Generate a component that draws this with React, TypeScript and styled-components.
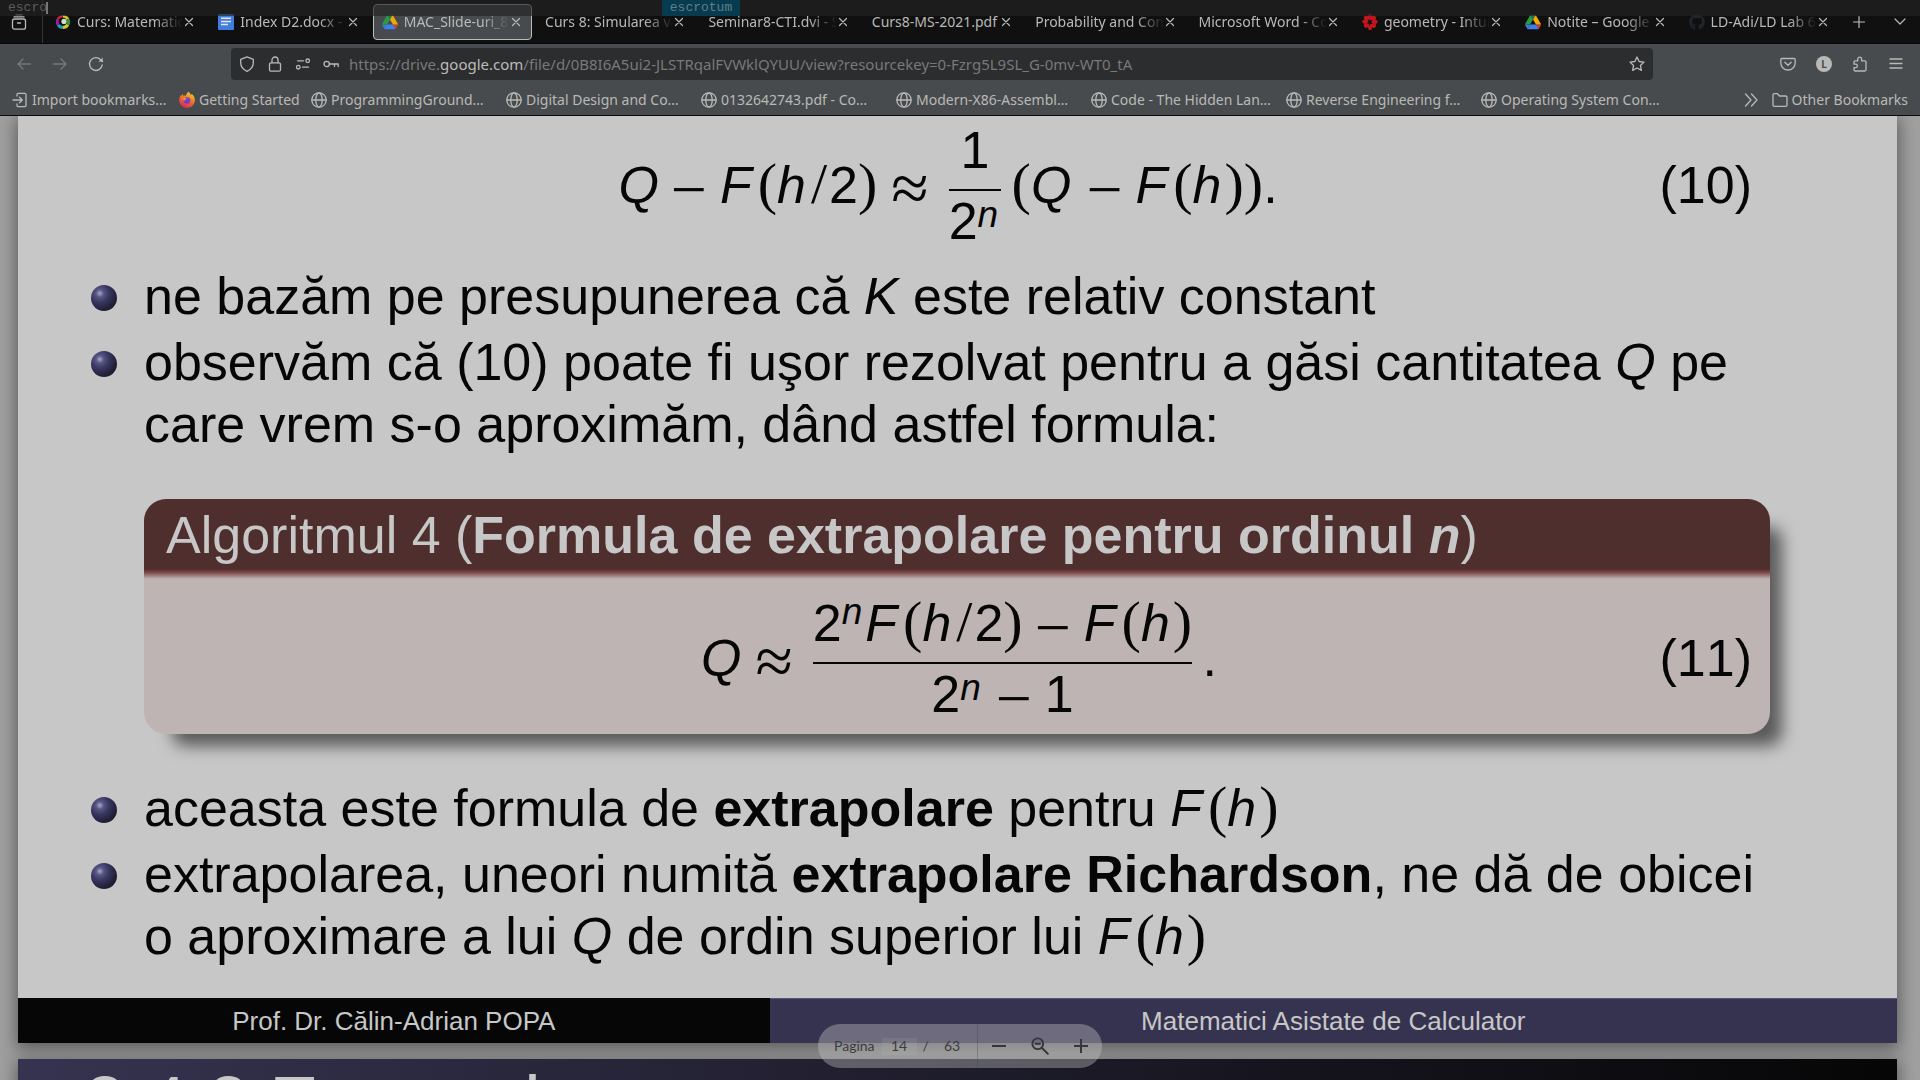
import React from "react";
import styled, { createGlobalStyle } from "styled-components";
import { FaGithub } from "react-icons/fa";

const ui = `"Noto Sans", "Open Sans", sans-serif`;
const slideFont = `"Liberation Sans", Arial, sans-serif`;
const serif = `"Liberation Serif", "Times New Roman", serif`;
const mono = `"Liberation Mono", "Courier New", monospace`;

const Global = createGlobalStyle`
  * { box-sizing: border-box; }
  body { margin: 0; background: #111; overflow: hidden; }
  button, input { font: inherit; color: inherit; margin: 0; }
`;

const Window = styled.div`
  height: 100vh;
  display: flex;
  flex-direction: column;
  font-family: ${ui};
  font-size: 14px;
  color: #b9b9b7;
`;

/* ---------- launcher bar ---------- */

const Launcher = styled.div`
  position: absolute;
  top: 0;
  left: 0;
  right: 0;
  height: 16px;
  z-index: 5;
  background: rgba(35, 35, 35, 0.66);
  font-family: ${mono};
  font-size: 13px;
  line-height: 16px;
  color: #5c5c5c;
  display: flex;
`;

const Query = styled.input`
  width: 662px;
  height: 16px;
  padding: 0 8px;
  border: 0;
  outline: 0;
  background: transparent;
`;

const Caret = styled.span`
  position: absolute;
  left: 46px;
  top: 2px;
  width: 2px;
  height: 12px;
  background: #777;
`;

const Match = styled.button`
  width: 78px;
  border: 0;
  padding: 0;
  background: #073b50;
  color: #5f7f88;
`;

/* ---------- tabs ---------- */

const TabStrip = styled.div`
  height: 44px;
  display: flex;
  align-items: center;
  background: #101010;
  border-bottom: 1px solid #060606;
`;

const IconButton = styled.button<{ $w?: number; $color?: string }>`
  width: ${(p) => p.$w ?? 36}px;
  height: 32px;
  flex: none;
  padding: 0;
  border: 0;
  background: transparent;
  display: flex;
  align-items: center;
  justify-content: center;
  color: ${(p) => p.$color ?? "#b9b9b7"};
`;

const ViewSlot = styled.div`
  width: 43px;
  height: 100%;
  flex: none;
  display: flex;
  align-items: center;
  justify-content: center;
  padding-right: 4px;
  border-right: 1px solid #333;
`;

const Tabs = styled.div`
  flex: 1;
  min-width: 0;
  display: flex;
  gap: 4px;
  padding-left: 3px;
`;

const Tab = styled.div<{ $active?: boolean }>`
  flex: 1 1 0;
  min-width: 0;
  height: 36px;
  display: flex;
  align-items: center;
  gap: 6px;
  padding: 0 7px 0 8px;
  border: 1px solid ${(p) => (p.$active ? "#bcbcba" : "transparent")};
  border-radius: 4px;
  background: ${(p) => (p.$active ? "#484b4d" : "transparent")};
`;

const TabTitle = styled.span<{ $fade?: boolean }>`
  flex: 1;
  min-width: 0;
  overflow: hidden;
  white-space: nowrap;
  line-height: 20px;
  ${(p) => p.$fade && "mask-image: linear-gradient(to left, transparent, #000 28px);"}
`;

const TabClose = styled.button`
  width: 16px;
  height: 16px;
  flex: none;
  margin-left: -8px;
  padding: 0;
  border: 0;
  background: transparent;
  display: flex;
  align-items: center;
  justify-content: center;
`;

const TabTools = styled.div`
  width: 81px;
  flex: none;
  display: flex;
  justify-content: space-between;
`;

/* ---------- navigation ---------- */

const NavBar = styled.div`
  height: 40px;
  flex: none;
  display: flex;
  align-items: center;
  padding: 0 6px;
  background: #484b4d;
`;

const UrlBox = styled.div`
  flex: 1;
  min-width: 0;
  height: 32px;
  margin: 0 117px;
  padding: 0 2px;
  display: flex;
  align-items: center;
  border-radius: 4px;
  background: #2c2d2f;
`;

const UrlText = styled.div`
  flex: 1;
  min-width: 0;
  overflow: hidden;
  padding-left: 4px;
  font-size: 15px;
  color: #797979;
  white-space: nowrap;

  b {
    font-weight: 400;
    color: #bcbcba;
  }
`;

const Avatar = styled.span`
  width: 16px;
  height: 16px;
  border-radius: 50%;
  background: #b9b9b7;
  color: #484b4d;
  font-size: 10px;
  font-weight: 700;
  line-height: 16px;
  text-align: center;
`;

const Bookmarks = styled.nav`
  height: 32px;
  flex: none;
  display: flex;
  align-items: center;
  padding: 0 12px;
  background: #484b4d;
  border-bottom: 1px solid #0c0c0d;
`;

const Bookmark = styled.a<{ $w?: number }>`
  width: ${(p) => (p.$w ? p.$w + "px" : "auto")};
  display: flex;
  align-items: center;
  gap: 4px;
  white-space: nowrap;
  color: inherit;
  text-decoration: none;
`;

const Spacer = styled.div`
  flex: 1;
`;

/* ---------- document viewer ---------- */

const Viewer = styled.main`
  position: relative;
  flex: 1;
  min-height: 0;
  overflow: hidden;
  padding: 0 23px 0 18px;
  background: #a0a0a0;
  color: #060606;
  font-family: ${slideFont};
  font-size: 52px;
  line-height: 62px;
`;

const Slide = styled.article`
  margin-bottom: 16px;
  background: #c7c7c7;
  box-shadow: 0 4px 16px 2px #5c5c5c;
`;

const SlideBody = styled.div`
  padding: 3px 145px 31px 126px;
`;

const Equation = styled.div`
  display: grid;
  grid-template-columns: 1fr auto 1fr;
  align-items: center;
`;

const EqNumber = styled.span`
  justify-self: end;
  font-kerning: none;
`;

const Formula = styled.div`
  grid-column: 2;
  display: flex;
  align-items: center;
  white-space: nowrap;
`;

const Fraction = styled.span`
  display: flex;
  flex-direction: column;
  text-align: center;
`;

const Numerator = styled.span`
  padding-bottom: 8px;
  border-bottom: 2px solid #060606;
`;

const Denominator = styled.span`
  line-height: 60px;
`;

const Paren = styled.span`
  font-family: ${serif};
  font-size: 58px;
  line-height: 0;
`;

const Slash = styled(Paren)`
  padding: 0 2px;
`;

const Minus = styled.span`
  font-family: ${serif};
  font-size: 64px;
  line-height: 0;
  vertical-align: -8px;
  margin: 0 13px 0 12px;
`;

const Approx = styled.span`
  font-family: ${serif};
  font-size: 68px;
  line-height: 0;
  vertical-align: -8px;
  margin: 0 20px 0 14px;
`;

const Var = styled.i`
  padding-right: 3px;
`;

const VarF = styled.i`
  padding-right: 6px;
`;

const Exponent = styled.i<{ $raise: number }>`
  font-size: 37px;
  line-height: 0;
  padding-right: 3px;
  vertical-align: ${(p) => p.$raise}px;
`;

const Points = styled.ul<{ $top?: number }>`
  list-style: none;
  margin: ${(p) => p.$top ?? 0}px 0 0;
  padding: 0;
  display: flex;
  flex-direction: column;
  gap: 4px;
`;

const Point = styled.li`
  position: relative;
  white-space: nowrap;

  &::before {
    content: "";
    position: absolute;
    left: -53px;
    top: 20px;
    width: 26px;
    height: 26px;
    border-radius: 50%;
    background: radial-gradient(circle at 34% 32%, #a9a9c4 0, #565585 16%, #38365f 38%, #201f35 68%, #191827 100%);
  }
`;

const Block = styled.section`
  margin: 44px -18px 43px 0;
  border-radius: 22px;
  background: #beb4b4;
  box-shadow: 20px 20px 16px -8px #5a5a5a;
`;

const BlockTitle = styled.h2`
  margin: 0;
  padding: 5px 22px 13px;
  border-radius: 22px 22px 0 0;
  background: linear-gradient(to top, #beb4b4 0, #7a4242 7px, #4f2f2e 10px);
  color: #c7c7c7;
  font-size: 52px;
  font-weight: 400;
  white-space: nowrap;
`;

const BlockBody = styled.div`
  padding: 13px 18px 10px 22px;
`;

const SlideFooter = styled.footer`
  display: flex;
  height: 45px;
  font-size: 26px;
  line-height: 46px;
  text-align: center;
  color: #c7c7c7;
`;

const Author = styled.div`
  flex: 2;
  background: #060606;
`;

const Course = styled.div`
  flex: 3;
  background: #363350;
  box-shadow: inset 0 1px #55527c;
`;

const NextTitle = styled.h1`
  margin: 0;
  padding: 7px 66px;
  font-size: 74px;
  line-height: 74px;
  font-weight: 400;
  color: #c7c7c7;
  background: linear-gradient(to right, #363350, #060606);
`;

const Pager = styled.form`
  position: absolute;
  left: 50%;
  bottom: 12px;
  margin-left: -142px;
  width: 284px;
  height: 44px;
  display: flex;
  align-items: center;
  border-radius: 22px;
  background: rgba(195, 195, 195, 0.39);
  color: #3c3c40;
  font-family: Lato, Roboto, sans-serif;
  font-size: 14px;
  line-height: 20px;
`;

const PageLabel = styled.label`
  width: 160px;
  height: 44px;
  padding-left: 16px;
  display: flex;
  align-items: center;
  border-right: 1px solid rgba(60, 60, 64, 0.3);
`;

const PageInput = styled.input`
  width: 35px;
  height: 17px;
  margin: 0 6px 0 7px;
  padding: 0;
  border: 0;
  text-align: center;
  background: rgba(195, 195, 195, 0.12);
`;

const PageTotal = styled.span`
  padding-left: 15px;
`;

const PagerButtons = styled.div`
  flex: 1;
  display: flex;
  justify-content: space-around;
`;

/* ---------- icons ---------- */

const Icon = styled.svg`
  flex: none;
`;

const Svg = ({ size = 16, children, sw = 1.3 }: { size?: number; children: React.ReactNode; sw?: number }) => (
  <Icon width={size} height={size} viewBox="0 0 16 16" fill="none" stroke="currentColor" strokeWidth={sw} strokeLinecap="round" strokeLinejoin="round">
    {children}
  </Icon>
);

const GithubIcon = styled(FaGithub)`
  flex: none;
  width: 16px;
  height: 16px;
  color: #20262b;
`;

const CloseIcon = () => <Svg sw={1.2}><path d="M4.5 4.5l7 7M11.5 4.5l-7 7" /></Svg>;
const ViewIcon = () => (
  <Svg><rect x="1.5" y="5" width="13" height="10.2" rx="2" /><path d="M3 2.9h10M5 0.8h6M6.500 9h3" /></Svg>
);
const GlobeIcon = () => (
  <Svg><circle cx="8" cy="8" r="7.2" /><ellipse cx="8" cy="8" rx="3.2" ry="7.2" /><path d="M1 8h14" /></Svg>
);
const ImportIcon = () => (
  <Svg><path d="M5 4V2.6A1.3 1.3 0 0 1 6.3 1.3h6.4A1.3 1.3 0 0 1 14 2.6v10.8a1.3 1.3 0 0 1-1.3 1.3H6.3A1.3 1.3 0 0 1 5 13.4V12M1 8h9M7.5 5.2L10.3 8l-2.8 2.8" /></Svg>
);
const DriveIcon = () => (
  <Icon width="16" height="16" viewBox="0 0 87.3 78">
    <path fill="#3b78d8" d="M6.6 66.9l3.8 6.6c.8 1.4 2 2.5 3.3 3.3L27.5 53H0c0 1.5.4 3.1 1.2 4.5z" />
    <path fill="#2a9a48" d="M43.7 25L29.9 1.2c-1.3.8-2.5 1.9-3.3 3.3l-25.4 44A9 9 0 0 0 0 53h27.5z" />
    <path fill="#d93a2e" d="M73.6 76.8c1.3-.8 2.5-1.9 3.3-3.3l1.6-2.7 7.6-13.3c.8-1.4 1.2-3 1.2-4.5H59.8l5.9 11.5z" />
    <path fill="#1d8040" d="M43.7 25L57.4 1.2C56.1.4 54.5 0 52.9 0H34.4c-1.6 0-3.2.5-4.5 1.2z" />
    <path fill="#3f80e8" d="M59.8 53H27.5L13.7 76.8c1.4.8 2.9 1.2 4.5 1.2h50.9c1.6 0 3.2-.4 4.5-1.2z" />
    <path fill="#eda908" d="M73.4 26.5L60.7 4.5c-.8-1.4-2-2.5-3.3-3.3L43.7 25l16.1 28h27.5c0-1.6-.4-3.1-1.2-4.5z" />
  </Icon>
);
const DocsIcon = () => (
  <Icon width="16" height="16" viewBox="0 0 16 16">
    <rect width="16" height="16" rx="1" fill="#3f7de0" />
    <path d="M3 4.2h10M3 7.4h10M3 10.6h7" stroke="#e4e4e4" strokeWidth="1.5" />
  </Icon>
);
const RingIcon = () => (
  <Icon width="16" height="16" viewBox="0 0 16 16" fill="none" strokeWidth="3.4">
    <path d="M8 2.6A5.4 5.4 0 0 1 12.7 5.3" stroke="#d6c71c" />
    <path d="M12.7 5.3A5.4 5.4 0 0 1 12.7 10.7" stroke="#2f9a3c" />
    <path d="M12.7 10.7A5.4 5.4 0 0 1 8 13.4" stroke="#d6c71c" />
    <path d="M8 13.4A5.4 5.4 0 0 1 3.3 10.7" stroke="#1b9fc0" />
    <path d="M3.3 10.7A5.4 5.4 0 0 1 3.3 5.3" stroke="#a01fa8" />
    <path d="M3.3 5.3A5.4 5.4 0 0 1 8 2.6" stroke="#d3262c" />
    <circle cx="7.6" cy="7.600" r="4" fill="#111" stroke="none" />
    <circle cx="9" cy="7.4" r="2.6" fill="#d8d8d8" stroke="none" />
  </Icon>
);
const GeometryIcon = () => (
  <Icon width="16" height="16" viewBox="0 0 16 16">
    <path fill="#c2161c" d="M6.6 0h3l.4 2.2 2-.9 2.4 2.2-1 2 2 1v2.6l-2 .8 1 2.2-2.2 2.2-2.200-1L9.400 16H6.800L6 13.200l-2.300.9-2.200-2.200 1-2.200L.500 8.900V6.400l2-.8-1-2.200L3.700 1.300l2.200 1z" />
    <path fill="#111" d="M7 4.200l1 2.400 2.600-.8-1.400 2.300 1.700 2-2.600-.1L7.500 12.300 6.800 9.800 4.300 9.300l2.200-1.400L5.500 5.500l1.900.9z" />
  </Icon>
);
const FirefoxIcon = () => (
  <Icon width="16" height="16" viewBox="0 0 16 16">
    <defs>
      <linearGradient id="fox" x1="0.8" y1="0" x2="0.3" y2="1">
        <stop offset="0" stopColor="#ecd838" />
        <stop offset="0.45" stopColor="#ee7a25" />
        <stop offset="1" stopColor="#d9225c" />
      </linearGradient>
    </defs>
    <path fill="url(#fox)" d="M9.500 0c1.500 1 2 2 2.200 3 .7-.2 1-.6 1.200-1C15 4 16 6 15.900 8.300 15.700 12.700 12.300 16 8 16 3.600 16 .2 12.600.2 8.300c0-2 .6-3.800 1.700-5.300v1.300C2.600 3.200 3.300 2.300 4 2c-.1.700 0 1.300.2 1.800C5 3.400 6 3.400 7 3.700 7.200 2 8.200.6 9.500 0z" />
    <circle cx="8" cy="8.600" r="3.300" fill="#7140c8" />
    <path fill="#f09a28" d="M4 6.500c1.500-.7 3-.4 4 .6-1.300 0-1.900.7-2.100 1.500C4.800 8.300 4.200 7.600 4 6.500z" />
  </Icon>
);

/* ---------- data ---------- */

type TabInfo = { title: string; icon?: React.ReactNode; active?: boolean; fade?: boolean };

const tabs: TabInfo[] = [
  { title: "Curs: Matematic", icon: <RingIcon />, fade: true },
  { title: "Index D2.docx -", icon: <DocsIcon />, fade: true },
  { title: "MAC_Slide-uri_8", icon: <DriveIcon />, active: true, fade: true },
  { title: "Curs 8: Simularea va", fade: true },
  { title: "Seminar8-CTI.dvi - S", fade: true },
  { title: "Curs8-MS-2021.pdf" },
  { title: "Probability and Com", fade: true },
  { title: "Microsoft Word - Co", fade: true },
  { title: "geometry - Intui", icon: <GeometryIcon />, fade: true },
  { title: "Notite – Google", icon: <DriveIcon />, fade: true },
  { title: "LD-Adi/LD Lab 6", icon: <GithubIcon />, fade: true },
];

const bookmarks = [
  { title: "Import bookmarks…", w: 167, icon: <ImportIcon /> },
  { title: "Getting Started", w: 132, icon: <FirefoxIcon /> },
  { title: "ProgrammingGround…", w: 195 },
  { title: "Digital Design and Co…", w: 195 },
  { title: "0132642743.pdf - Co…", w: 195 },
  { title: "Modern-X86-Assembl…", w: 195 },
  { title: "Code - The Hidden Lan…", w: 195 },
  { title: "Reverse Engineering f…", w: 195 },
  { title: "Operating System Con…", w: 195 },
];

const FofH = ({ half }: { half?: boolean }) => (
  <span>
    <VarF>F</VarF>
    <Paren>(</Paren>
    <Var>h</Var>
    {half && <><Slash>/</Slash>2</>}
    <Paren>)</Paren>
  </span>
);

export default function App() {
  return (
    <Window>
      <Global />
      <Launcher>
        <Query aria-label="Run" defaultValue="escro" />
        <Caret />
        <Match type="button">escrotum</Match>
      </Launcher>

      <TabStrip>
        <ViewSlot>
          <IconButton $w={32} aria-label="Firefox View"><ViewIcon /></IconButton>
        </ViewSlot>
        <Tabs>
          {tabs.map((t) => (
            <Tab key={t.title} $active={t.active}>
              {t.icon}
              <TabTitle $fade={t.fade}>{t.title}</TabTitle>
              <TabClose aria-label={`Close ${t.title}`}><CloseIcon /></TabClose>
            </Tab>
          ))}
        </Tabs>
        <TabTools>
          <IconButton $w={40} aria-label="New tab"><Svg sw={1.2}><path d="M8 2.500v11M2.500 8h11" /></Svg></IconButton>
          <IconButton $w={40} aria-label="List all tabs"><Svg sw={1.2}><path d="M3 5l5 5 5-5" /></Svg></IconButton>
        </TabTools>
      </TabStrip>

      <NavBar>
        <IconButton $color="#76787a" aria-label="Back"><Svg><path d="M14.500 8H2M7 3L2 8l5 5" /></Svg></IconButton>
        <IconButton $color="#76787a" aria-label="Forward"><Svg><path d="M1.500 8H14M9 3l5 5-5 5" /></Svg></IconButton>
        <IconButton aria-label="Reload"><Svg sw={1.400}><path d="M14.200 9A6.400 6.400 0 1 1 12.600 3.700L14.500 5.500" /><path d="M14.700 1.500v4.200h-4.200z" fill="currentColor" stroke="none" /></Svg></IconButton>
        <UrlBox>
          <IconButton $w={28} aria-label="Tracking protection"><Svg><path d="M8 .8L14.300 3.300v3.500c0 4-2.500 6.800-6.300 8.500C4.200 13.600 1.700 10.800 1.700 6.800V3.300z" /></Svg></IconButton>
          <IconButton $w={28} aria-label="Connection secure"><Svg><rect x="2.500" y="6.800" width="11" height="8.400" rx="1.500" /><path d="M5 6.800V4a3 3 0 0 1 6 0v2.800" /></Svg></IconButton>
          <IconButton $w={28} aria-label="Permissions"><Svg><circle cx="12.700" cy="4.800" r="1.800" /><circle cx="3.300" cy="11.200" r="1.800" /><path d="M2.500 4.800h6M7.500 11.200h6" /></Svg></IconButton>
          <IconButton $w={28} aria-label="Saved logins"><Svg><circle cx="3.700" cy="8" r="2.700" /><path d="M6.400 8h8.800v2.600M11.500 8v2.400" /></Svg></IconButton>
          <UrlText>https://drive.<b>google.com</b>/file/d/0B8I6A5ui2-JLSTRqalFVWklQYUU/view?resourcekey=0-Fzrg5L9SL_G-0mv-WT0_tA</UrlText>
          <IconButton $w={28} aria-label="Bookmark this page"><Svg><path d="M8 1l2.100 4.500 4.900.6-3.600 3.400 1 4.900L8 12l-4.400 2.400 1-4.900L1 6.100l4.900-.6z" /></Svg></IconButton>
        </UrlBox>
        <IconButton aria-label="Save to Pocket"><Svg><path d="M1.800 2.500h12.400a1 1 0 0 1 1 1V7a7.200 7 0 0 1-14.400 0V3.500a1 1 0 0 1 1-1z" /><path d="M4.800 6.200L8 9.300l3.200-3.100" /></Svg></IconButton>
        <IconButton aria-label="Account"><Avatar>L</Avatar></IconButton>
        <IconButton aria-label="Extensions"><Svg><path d="M5.800 4.800V3a1.900 1.900 0 0 1 3.800 0v1.800h3.200a1.200 1.200 0 0 1 1.200 1.200v7.800a1.200 1.200 0 0 1-1.200 1.200H3.200A1.200 1.200 0 0 1 2 13.800V11.600h1.700a1.700 1.700 0 0 0 0-3.400H2V6a1.200 1.200 0 0 1 1.200-1.200z" /></Svg></IconButton>
        <IconButton aria-label="Open menu"><Svg><path d="M2 3h12M2 7.500h12M2 12h12" /></Svg></IconButton>
      </NavBar>

      <Bookmarks>
        {bookmarks.map((b) => (
          <Bookmark key={b.title} href="#" $w={b.w}>
            {b.icon ?? <GlobeIcon />}
            {b.title}
          </Bookmark>
        ))}
        <Spacer />
        <IconButton $w={42} aria-label="More bookmarks"><Svg><path d="M2.500 2l5.500 6-5.500 6M8.500 2l5.500 6-5.500 6" /></Svg></IconButton>
        <Bookmark href="#">
          <Svg><path d="M1 13V3a1.300 1.300 0 0 1 1.300-1.300h3.200l2 2.300h6.200A1.300 1.300 0 0 1 15 5.300V13a1.300 1.300 0 0 1-1.300 1.300H2.300A1.300 1.300 0 0 1 1 13z" /></Svg>
          Other Bookmarks
        </Bookmark>
      </Bookmarks>

      <Viewer>
        <Slide>
          <SlideBody>
            <Equation>
              <Formula>
                <span>
                  <i>Q</i>
                  <Minus>−</Minus>
                  <FofH half />
                  <Approx>≈</Approx>
                </span>
                <Fraction>
                  <Numerator>1</Numerator>
                  <Denominator>2<Exponent $raise={12}>n</Exponent></Denominator>
                </Fraction>
                <span>
                  &thinsp;
                  <Paren>(</Paren>
                  <Var>Q</Var>
                  <Minus>−</Minus>
                  <FofH />
                  <Paren>)</Paren>.
                </span>
              </Formula>
              <EqNumber>(10)</EqNumber>
            </Equation>
            <Points $top={14}>
              <Point>ne bazăm pe presupunerea că <i>K</i> este relativ constant</Point>
              <Point>
                observăm că (10) poate fi uşor rezolvat pentru a găsi cantitatea <i>Q</i> pe
                <br />
                care vrem s-o aproximăm, dând astfel formula:
              </Point>
            </Points>

            <Block>
              <BlockTitle>Algoritmul 4 (<b>Formula de extrapolare pentru ordinul <i>n</i></b>)</BlockTitle>
              <BlockBody>
                <Equation>
                  <Formula>
                    <span>
                      <i>Q</i>
                      <Approx>≈</Approx>
                    </span>
                    <Fraction>
                      <Numerator>
                        2<Exponent $raise={17}>n</Exponent>
                        <FofH half />
                        <Minus>−</Minus>
                        <FofH />
                      </Numerator>
                      <Denominator>
                        2<Exponent $raise={12}>n</Exponent>
                        <Minus>−</Minus>1
                      </Denominator>
                    </Fraction>
                    <span>&thinsp;.</span>
                  </Formula>
                  <EqNumber>(11)</EqNumber>
                </Equation>
              </BlockBody>
            </Block>

            <Points>
              <Point>aceasta este formula de <b>extrapolare</b> pentru <FofH /></Point>
              <Point>
                extrapolarea, uneori numită <b>extrapolare Richardson</b>, ne dă de obicei
                <br />
                o aproximare a lui <i>Q</i> de ordin superior lui <FofH />
              </Point>
            </Points>
          </SlideBody>
          <SlideFooter>
            <Author>Prof. Dr. Călin-Adrian POPA</Author>
            <Course>Matematici Asistate de Calculator</Course>
          </SlideFooter>
        </Slide>

        <Slide>
          <NextTitle>2.4.2 Extrapolarea</NextTitle>
        </Slide>

        <Pager onSubmit={(e) => e.preventDefault()}>
          <PageLabel>
            Pagina
            <PageInput defaultValue="14" />
            /
            <PageTotal>63</PageTotal>
          </PageLabel>
          <PagerButtons>
            <IconButton type="button" $w={28} $color="#36363a" aria-label="Zoom out"><Svg sw={2}><path d="M1 8h14" strokeLinecap="butt" /></Svg></IconButton>
            <IconButton type="button" $w={28} $color="#36363a" aria-label="Reset zoom"><Svg size={18} sw={1.700}><circle cx="6" cy="6" r="4.800" /><path d="M9.800 9.800l5.200 5.200M4 6h4" /></Svg></IconButton>
            <IconButton type="button" $w={28} $color="#36363a" aria-label="Zoom in"><Svg sw={2}><path d="M8 1v14M1 8h14" strokeLinecap="butt" /></Svg></IconButton>
          </PagerButtons>
        </Pager>
      </Viewer>
    </Window>
  );
}
